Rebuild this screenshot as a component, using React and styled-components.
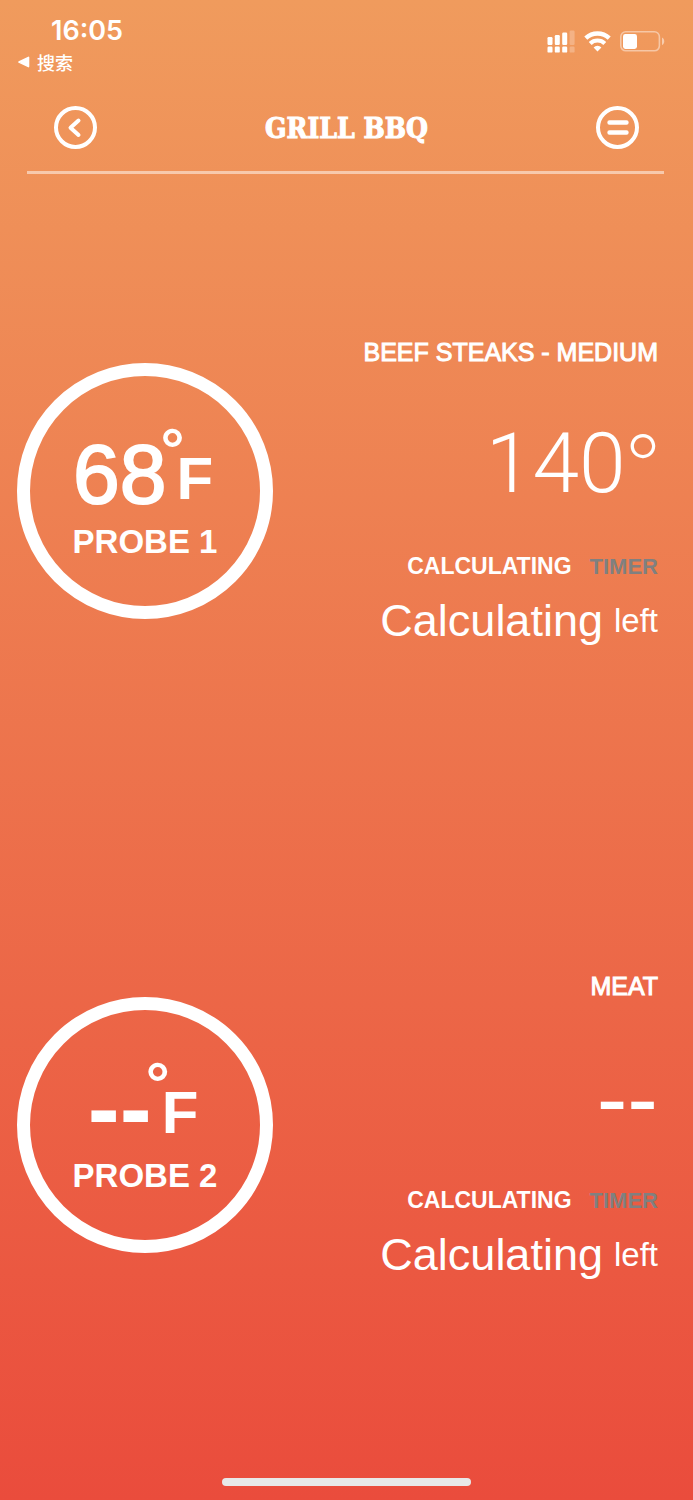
import React, { useState } from 'react';
import styled, { createGlobalStyle } from 'styled-components';

const GlobalStyle = createGlobalStyle`
  * {
    box-sizing: border-box;
  }
  body {
    margin: 0;
    color: #fff;
    font-family: 'Liberation Sans', Arial, sans-serif;
  }
  h1, h2, p {
    margin: 0;
    font-weight: 400;
  }
  button {
    padding: 0;
    border: 0;
    background: none;
    color: inherit;
    font: inherit;
    cursor: pointer;
  }
`;

const Screen = styled.div`
  display: flex;
  flex-direction: column;
  min-height: 100vh;
  background: linear-gradient(180deg, #f09b5d 0%, #ea4c3c 100%);
`;

const StatusBar = styled.div`
  display: flex;
  justify-content: space-between;
  align-items: flex-start;
  padding: 15px 28px 0 17px;
`;

const Clock = styled.p`
  padding-left: 34px;
  font: 600 27px/32px Inter, sans-serif;
`;

const BackToApp = styled.a`
  display: flex;
  align-items: center;
  gap: 7px;
  color: inherit;
  font: 500 18px/30px 'Noto Sans CJK SC', sans-serif;
  text-decoration: none;
`;

const StatusIcons = styled.div`
  display: flex;
  align-items: flex-start;
  gap: 9px;
  padding-top: 15px;
`;

const Header = styled.header`
  display: flex;
  align-items: center;
  justify-content: space-between;
  height: 97px;
  margin: 0 29px 0 27px;
  padding: 6px 25px 0 27px;
  border-bottom: 3px solid rgba(255, 255, 255, 0.5);
`;

const Title = styled.h1`
  padding-top: 4px;
  font: 700 28px/36px 'DejaVu Serif Condensed', 'DejaVu Serif', serif;
  font-stretch: condensed;
  -webkit-text-stroke: 1px #fff;
`;

const RoundButton = styled.button`
  display: flex;
  align-items: center;
  justify-content: center;
  width: 43px;
  height: 43px;
  border: 4px solid #fff;
  border-radius: 50%;
`;

const ProbeList = styled.main`
  display: flex;
  flex: 1;
  flex-direction: column;
`;

const ProbeRow = styled.section`
  display: flex;
  flex: 1;
  align-items: center;
  justify-content: space-between;
  padding: 0 35px 0 17px;
`;

const Dial = styled.div`
  display: flex;
  flex-direction: column;
  align-items: center;
  width: 256px;
  height: 256px;
  padding-top: 50px;
  border: 13px solid #fff;
  border-radius: 50%;
`;

const Reading = styled.p`
  display: flex;
  align-items: flex-end;
  height: 96px;
  margin-right: 4px;
  font-size: ${props => (props.$empty ? 96 : 84)}px;
  line-height: 96px;
  font-weight: ${props => (props.$empty ? 700 : 400)};
  -webkit-text-stroke: ${props => (props.$empty ? 0 : 2)}px #fff;
`;

const Degree = styled.span`
  align-self: flex-start;
  margin: 0 -8px 0 -6px;
  font-size: 60px;
  line-height: 48px;
  font-weight: 700;
  -webkit-text-stroke: 0;
`;

const Unit = styled.span`
  font-size: 60px;
  line-height: 86px;
  font-weight: 700;
  -webkit-text-stroke: 0;
`;

const ProbeName = styled.h2`
  font-size: 33px;
  line-height: 40px;
  font-weight: 700;
`;

const Details = styled.div`
  display: flex;
  flex-direction: column;
  align-items: flex-end;
`;

const Food = styled.p`
  font-size: 25px;
  line-height: 32px;
  -webkit-text-stroke: 1px #fff;
`;

const Target = styled.p`
  display: flex;
  align-items: baseline;
  height: 96px;
  margin: 48px 0 40px;
  font: 300 84px/96px Roboto, sans-serif;
`;

const EmptyTarget = styled(Target)`
  font: 400 92px/96px 'Liberation Sans', sans-serif;
`;

const TargetDegree = styled.span`
  margin: 0 -3px 0 -1px;
  font: 200 80px/80px Inter, sans-serif;
`;

const Modes = styled.div`
  display: flex;
  align-items: baseline;
  gap: 18px;
  margin-bottom: 14px;
  line-height: 28px;
`;

const ModeButton = styled.button`
  color: ${props => (props.$active ? '#fff' : '#808080')};
  font-size: ${props => (props.$active ? 23 : 22)}px;
  font-weight: 700;
`;

const Remaining = styled.p`
  display: flex;
  align-items: center;
  gap: 11px;
  font-size: 45px;
  line-height: 52px;
`;

const Left = styled.span`
  font-size: 33px;
`;

const HomeArea = styled.footer`
  display: flex;
  justify-content: center;
  align-items: flex-end;
  height: 58px;
  padding-bottom: 14px;
`;

const HomeBar = styled.div`
  width: 36%;
  height: 8px;
  border-radius: 4px;
  background: #e8e8e8;
`;

const probes = [
  { id: 1, food: 'BEEF STEAKS - MEDIUM', current: 68, target: 140 },
  { id: 2, food: 'MEAT', current: null, target: null },
];

function SignalIcon() {
  return (
    <svg width="28" height="23" viewBox="0 0 28 23" fill="#fff">
      <rect x="0.5" y="7" width="5" height="8" rx="1.2" />
      <rect x="7.8" y="5" width="5" height="10" rx="1.2" />
      <rect x="15.2" y="2.5" width="5" height="12.5" rx="1.2" />
      <rect x="22.6" y="0.5" width="5" height="14.5" rx="1.2" opacity=".25" />
      <rect x="0.5" y="16.6" width="5" height="6" rx="1.2" />
      <rect x="7.8" y="16.6" width="5" height="6" rx="1.2" />
      <rect x="15.2" y="16.6" width="5" height="6" rx="1.2" />
      <rect x="22.6" y="16.6" width="5" height="6" rx="1.2" opacity=".25" />
    </svg>
  );
}

function WifiIcon() {
  return (
    <svg width="27" height="22" viewBox="0 0 27 22">
      <path d="M1.8 8.2a17 17 0 0 1 23.4 0" fill="none" stroke="#fff" strokeWidth="4.4" />
      <path d="M6.2 13.4a10.6 10.6 0 0 1 14.6 0" fill="none" stroke="#fff" strokeWidth="4.2" />
      <path d="M13.5 21.4l-3.9-4a5.6 5.6 0 0 1 7.8 0z" fill="#fff" />
    </svg>
  );
}

function BatteryIcon() {
  return (
    <svg width="45" height="22" viewBox="0 0 45 22">
      <rect x="0.8" y="1.8" width="38.6" height="19" rx="5" fill="none" stroke="#fff" strokeOpacity=".45" strokeWidth="1.6" />
      <rect x="3" y="4" width="14" height="15" rx="2.4" fill="#fff" />
      <path d="M42 7.5c3 1.4 3 6.2 0 7.6z" fill="#fff" opacity=".5" />
    </svg>
  );
}

function Probe({ probe }) {
  const [mode, setMode] = useState('calculating');

  return (
    <ProbeRow>
      <Dial>
        <Reading $empty={!probe.current}>
          {probe.current || '--'}
          <Degree>°</Degree>
          <Unit>F</Unit>
        </Reading>
        <ProbeName>PROBE {probe.id}</ProbeName>
      </Dial>
      <Details>
        <Food>{probe.food}</Food>
        {probe.target ? (
          <Target>
            {probe.target}
            <TargetDegree>°</TargetDegree>
          </Target>
        ) : (
          <EmptyTarget>--</EmptyTarget>
        )}
        <Modes>
          <ModeButton $active={mode === 'calculating'} onClick={() => setMode('calculating')}>
            CALCULATING
          </ModeButton>
          <ModeButton $active={mode === 'timer'} onClick={() => setMode('timer')}>
            TIMER
          </ModeButton>
        </Modes>
        <Remaining>
          Calculating <Left>left</Left>
        </Remaining>
      </Details>
    </ProbeRow>
  );
}

export default function App() {
  return (
    <Screen>
      <GlobalStyle />
      <StatusBar>
        <div>
          <Clock>16:05</Clock>
          <BackToApp href="#search">
            <svg width="13" height="12" viewBox="0 0 13 12">
              <path d="M2 6l9.5-4.6v9.2z" fill="#fff" stroke="#fff" strokeWidth="1.6" strokeLinejoin="round" />
            </svg>
            搜索
          </BackToApp>
        </div>
        <StatusIcons>
          <SignalIcon />
          <WifiIcon />
          <BatteryIcon />
        </StatusIcons>
      </StatusBar>
      <Header>
        <RoundButton aria-label="Back">
          <svg width="35" height="35" viewBox="0 0 35 35">
            <path d="M20.5 10.5l-8 7.2 8 7.2" fill="none" stroke="#fff" strokeWidth="4" strokeLinecap="round" strokeLinejoin="round" />
          </svg>
        </RoundButton>
        <Title>GRILL BBQ</Title>
        <RoundButton aria-label="Menu">
          <svg width="35" height="35" viewBox="0 0 35 35">
            <path d="M9.5 12.5h17M9.5 22.5h17" stroke="#fff" strokeWidth="4.4" strokeLinecap="round" />
          </svg>
        </RoundButton>
      </Header>
      <ProbeList>
        {probes.map(probe => (
          <Probe key={probe.id} probe={probe} />
        ))}
      </ProbeList>
      <HomeArea>
        <HomeBar />
      </HomeArea>
    </Screen>
  );
}
